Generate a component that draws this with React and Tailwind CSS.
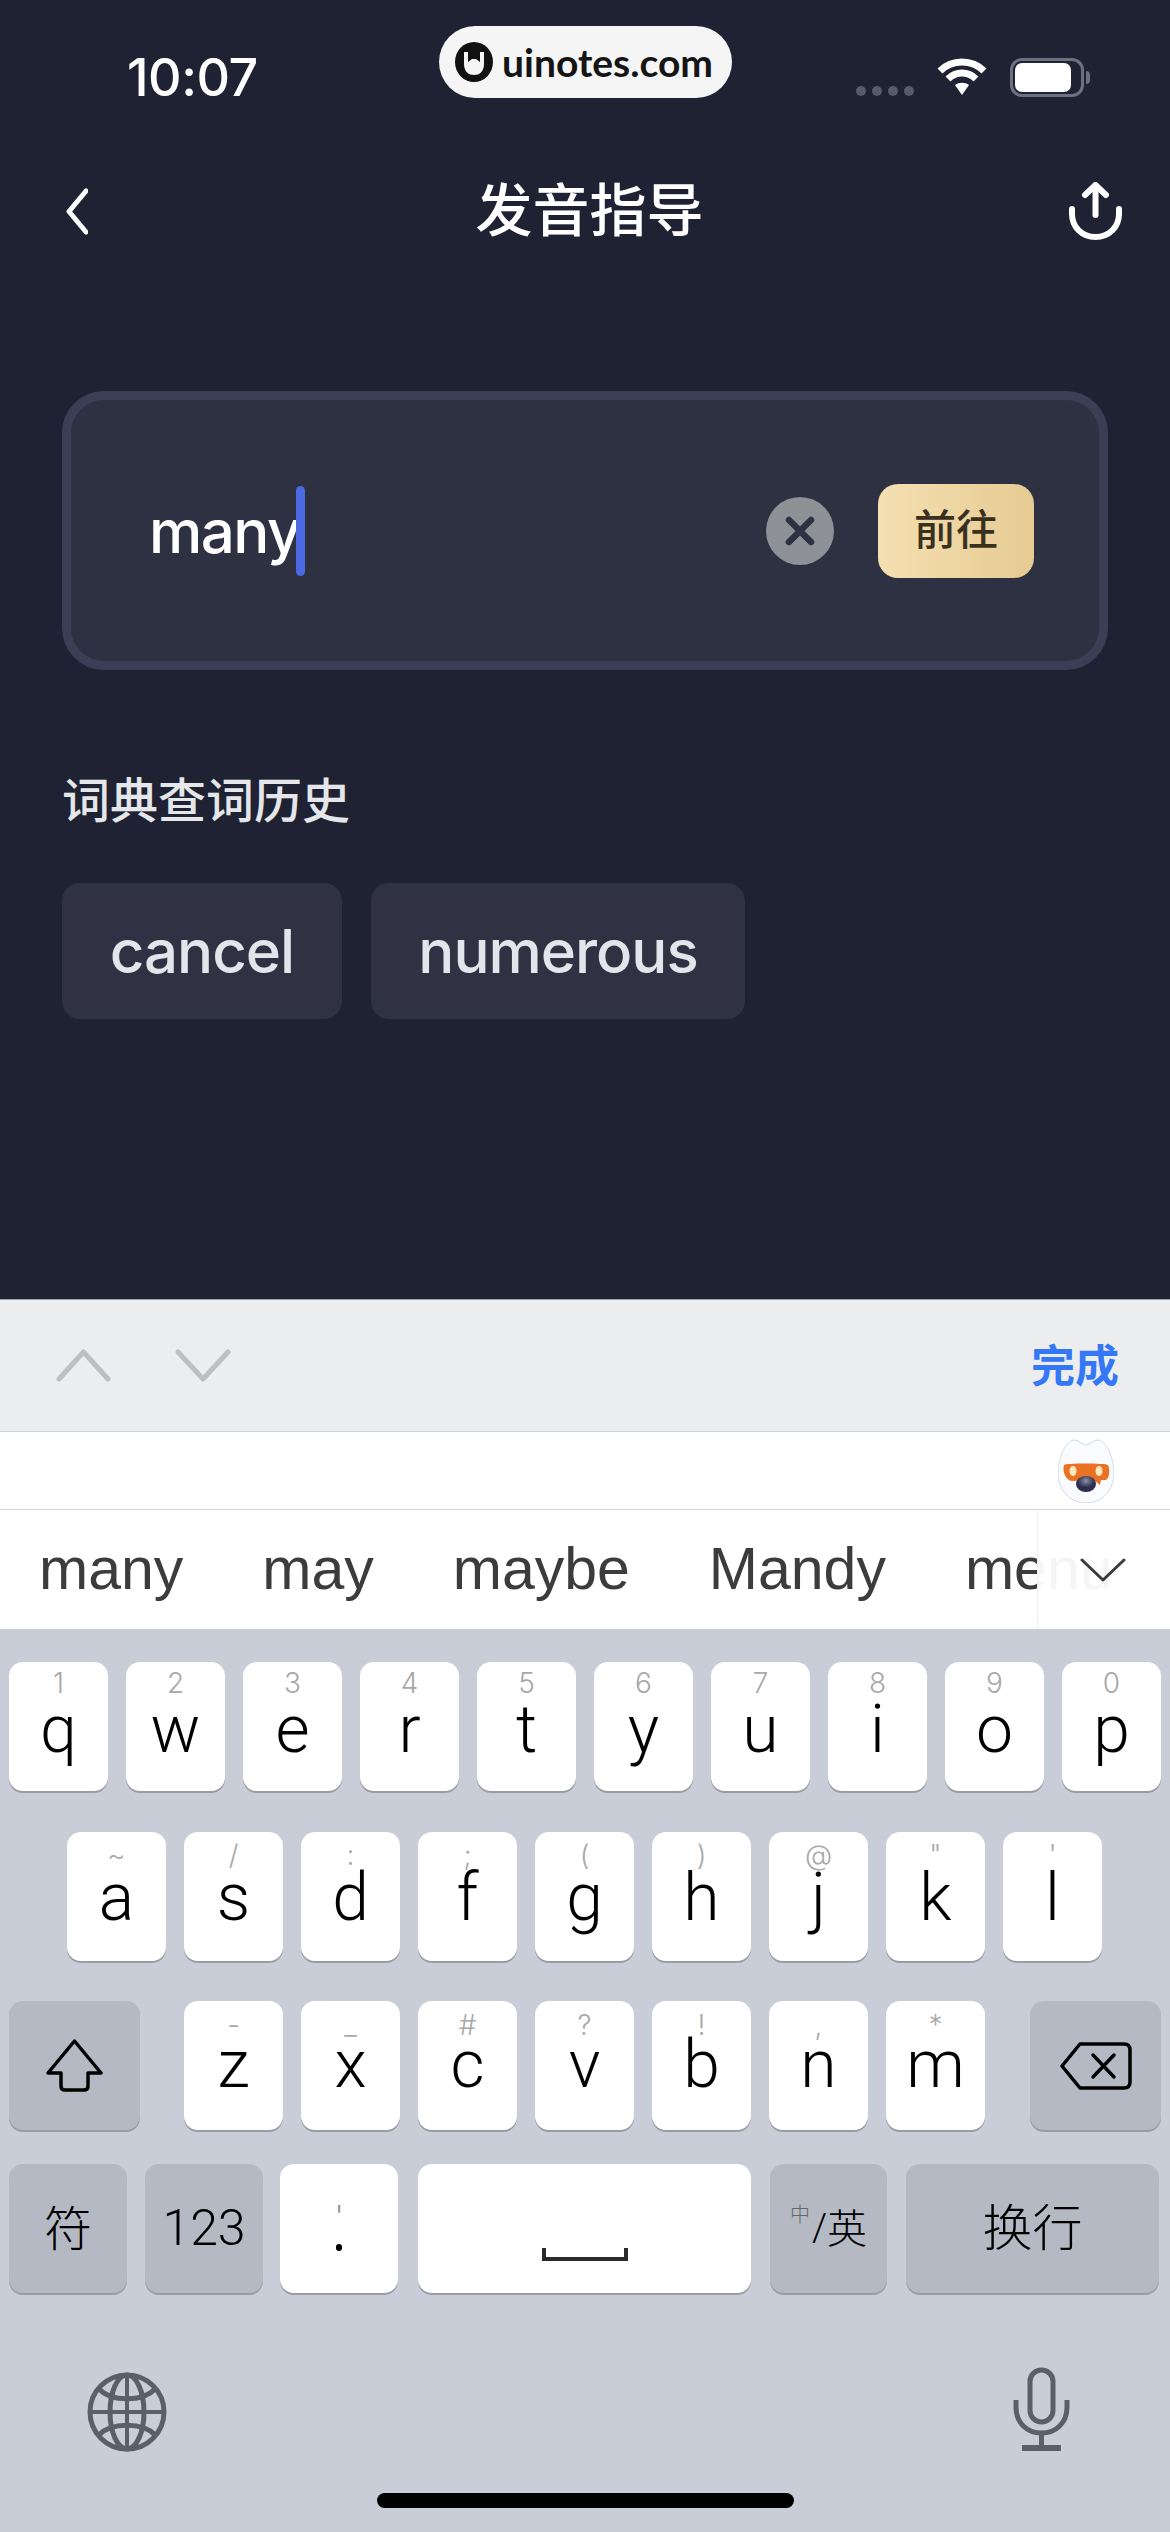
import React from "react";

const rowOne = [
  ["1", "q"], ["2", "w"], ["3", "e"], ["4", "r"], ["5", "t"],
  ["6", "y"], ["7", "u"], ["8", "i"], ["9", "o"], ["0", "p"],
];
const rowTwo = [
  ["~", "a"], ["/", "s"], [":", "d"], [";", "f"], ["(", "g"],
  [")", "h"], ["@", "j"], ['"', "k"], ["'", "l"],
];
const rowThree = [
  ["-", "z"], ["_", "x"], ["#", "c"], ["?", "v"], ["!", "b"], [",", "n"], ["*", "m"],
];

function LetterKey({ hint, letter, topClass, letterClass }) {
  return (
    <div className={`w-[99px] h-[129px] flex flex-col items-center bg-white rounded-[14px] shadow-[0_2px_0_#9a9ca3] ${topClass}`}>
      <span className="h-[28px] leading-[28px] text-[28px] font-light text-[#a8a8a8]">{hint}</span>
      <span className={`h-[66px] leading-[66px] text-[66px] font-light text-black font-['Roboto',sans-serif] ${letterClass}`}>{letter}</span>
    </div>
  );
}

function GrayKey({ width, children }) {
  return (
    <div className={`${width} h-[129px] flex items-center justify-center bg-[#b5b9c3] rounded-[14px] shadow-[0_2px_0_#9a9ca3] text-black`}>
      {children}
    </div>
  );
}

function StatusBar() {
  return (
    <div className="relative h-[150px] flex items-start pl-[127px] pr-[80px] pt-[47px]">
      <span className="text-[52px] leading-[62px] font-medium tracking-[-0.5px] text-white">10:07</span>

      {/* watermark */}
      <div className="absolute left-[439px] top-[26px] w-[293px] h-[72px] rounded-full bg-[#f5f5f5] flex items-center pl-[16px] gap-[9px]">
        <svg width="38" height="40" viewBox="0 0 38 40">
          <ellipse cx="19" cy="20" rx="19" ry="20" fill="#111" />
          <path d="M9 10 V22 C9 30 14 33 19 33 C24 33 29 30 29 22 V10 L25 10 V20 L21 17 H17 L13 20 V10 Z" fill="#f5f5f5" />
        </svg>
        <span className="text-[39px] leading-none font-bold text-[#151515] font-['Lato',sans-serif]">uinotes.com</span>
      </div>

      <div className="ml-auto flex items-start pt-[11px]">
        <div className="flex gap-[6px] mt-[28px]">
          <span className="w-[10px] h-[10px] rounded-full bg-[#565a6b]" />
          <span className="w-[10px] h-[10px] rounded-full bg-[#565a6b]" />
          <span className="w-[10px] h-[10px] rounded-full bg-[#565a6b]" />
          <span className="w-[10px] h-[10px] rounded-full bg-[#565a6b]" />
        </div>
        <svg className="ml-[23px]" width="50" height="37" viewBox="0 0 50 37" fill="none" stroke="#fff" strokeWidth="7">
          <path d="M3 13 C15 1 35 1 47 13" />
          <path d="M11 21 C19 13 31 13 39 21" />
          <path d="M18 27 L25 37 L32 27 C28 24 22 24 18 27 Z" fill="#fff" stroke="none" />
        </svg>
        <div className="ml-[23px] flex items-center">
          <div className="w-[74px] h-[39px] rounded-[12px] border-[3px] border-[#6d7080] p-[2px] pr-[10px]">
            <div className="w-full h-full rounded-[7px] bg-white" />
          </div>
          <span className="ml-[2px] w-[4px] h-[13px] rounded-r-full bg-[#6d7080]" />
        </div>
      </div>
    </div>
  );
}

function NavBar() {
  return (
    <div className="h-[122px] pl-[66px] pr-[48px] flex items-center justify-between">
      <div className="w-[44px]">
        <svg width="22" height="47" viewBox="0 0 22 47" fill="none" stroke="#fff" strokeWidth="5" strokeLinecap="round" strokeLinejoin="round">
          <path d="M20 3 L3 23.5 L20 44" />
        </svg>
      </div>
      <h1 className="text-[57px] leading-[70px] font-medium text-white">发音指导</h1>
      <svg width="53" height="58" viewBox="0 0 53 58" fill="none" stroke="#fff" strokeWidth="6" strokeLinecap="round" strokeLinejoin="round">
        <path d="M26.5 33 V4" />
        <path d="M16 13 L26.5 3 L37 13" />
        <path d="M3 27 V32 C3 45 13 55 26.5 55 C40 55 50 45 50 32 V27" />
      </svg>
    </div>
  );
}

function SearchBox() {
  return (
    <div className="mt-[119px] mx-[62px] h-[279px] rounded-[42px] border-[9px] border-[#3b3f55] bg-[#2e3142] flex items-center pl-[78px] pr-[65px]">
      <span className="text-[60px] leading-[90px] font-medium tracking-[-1.5px] text-white">many</span>
      <span className="w-[9px] h-[90px] rounded-full bg-[#4a69e2] -ml-[4px]" />
      <div className="ml-auto w-[68px] h-[68px] rounded-full bg-[#8e9196] flex items-center justify-center">
        <svg width="32" height="32" viewBox="0 0 32 32" fill="none" stroke="#2e3142" strokeWidth="6.5" strokeLinecap="round">
          <path d="M5 5 L27 27 M27 5 L5 27" />
        </svg>
      </div>
      <button className="ml-[44px] w-[156px] h-[94px] pb-[2px] rounded-[20px] bg-gradient-to-r from-[#f5e0b2] to-[#e6cb92] text-[42px] font-medium text-[#3a3020]">
        前往
      </button>
    </div>
  );
}

function History() {
  return (
    <div className="px-[62px]">
      <p className="mt-[101px] text-[48px] leading-[60px] font-medium text-[#e5e6ea]">词典查词历史</p>
      <div className="mt-[52px] flex gap-[29px]">
        <div className="w-[280px] h-[136px] rounded-[18px] bg-[#303244] flex items-center justify-center text-[60px] font-medium tracking-[-1px] text-[#e4e5ea]">cancel</div>
        <div className="w-[374px] h-[136px] rounded-[18px] bg-[#303244] flex items-center justify-center text-[60px] font-medium tracking-[-1px] text-[#e4e5ea]">numerous</div>
      </div>
    </div>
  );
}

function Toolbar() {
  return (
    <div className="h-[133px] bg-[#ecedef] border-t border-b border-t-[#9a9ea8] border-b-[#d4d5d8] flex items-center pl-[56px] pr-[51px]">
      <svg width="55" height="33" viewBox="0 0 55 33" fill="none" stroke="#bfbfbf" strokeWidth="5" strokeLinecap="round" strokeLinejoin="round">
        <path d="M3 30 L27.5 3 L52 30" />
      </svg>
      <svg className="ml-[64px]" width="56" height="33" viewBox="0 0 56 33" fill="none" stroke="#bfbfbf" strokeWidth="5" strokeLinecap="round" strokeLinejoin="round">
        <path d="M3 3 L28 30 L53 3" />
      </svg>
      <span className="ml-auto text-[44px] font-bold text-[#3478f6]">完成</span>
    </div>
  );
}

function MascotBar() {
  return (
    <div className="h-[78px] bg-white border-b border-[#d4d5d8] flex items-center justify-end pr-[56px]">
      <svg width="56" height="64" viewBox="0 0 56 64">
        <defs>
          <radialGradient id="nose" cx="50%" cy="30%" r="70%">
            <stop offset="0%" stopColor="#8a8ea8" />
            <stop offset="60%" stopColor="#2c2f4e" />
          </radialGradient>
        </defs>
        <path d="M28 6 C24 5 20 1 16 1 C7 2 0 20 0 34 C0 51 12 64 28 64 C44 64 56 51 56 34 C56 20 49 2 40 1 C36 1 32 5 28 6 Z" fill="#fafbfe" stroke="#d5d8e6" strokeWidth="1" />
        <path d="M6 26 C8 24 48 24 50 26 C52 30 52 38 48 41 L43 41 L42 46 L36 41 L14 42 C8 42 4 32 6 26 Z" fill="#ea7224" />
        <ellipse cx="15" cy="32" rx="3.5" ry="5" fill="#fdeabb" />
        <ellipse cx="41" cy="32" rx="3.5" ry="5" fill="#fdeabb" />
        <ellipse cx="28" cy="45" rx="10" ry="8" fill="url(#nose)" />
      </svg>
    </div>
  );
}

function Suggestions() {
  return (
    <div className="relative h-[119px] bg-white overflow-hidden flex items-center pl-[39px] gap-[79px] whitespace-nowrap text-[59px] text-[#3c3c3c] font-['Liberation_Sans',sans-serif]">
      <span>many</span>
      <span>may</span>
      <span>maybe</span>
      <span>Mandy</span>
      <span>menu</span>
      <div className="absolute right-0 top-0 bottom-0 w-[133px] bg-white/95 border-l border-[#f0f0f0] flex items-center justify-end pr-[44px]">
        <svg width="46" height="24" viewBox="0 0 46 24" fill="none" stroke="#3c3c3c" strokeWidth="3" strokeLinecap="round" strokeLinejoin="round">
          <path d="M2 2 L23 22 L44 2" />
        </svg>
      </div>
    </div>
  );
}

function Keyboard() {
  return (
    <div className="flex-1 bg-[#c9cdd7] flex flex-col pt-[33px]">
      <div className="flex gap-[18px] pl-[9px]">
        {rowOne.map(([hint, letter]) => (
          <LetterKey key={letter} hint={hint} letter={letter} topClass="pt-[7px]" letterClass="mt-0" />
        ))}
      </div>

      <div className="mt-[41px] flex gap-[18px] pl-[67px]">
        {rowTwo.map(([hint, letter]) => (
          <LetterKey key={letter} hint={hint} letter={letter} topClass="pt-[9px]" letterClass="-mt-[4px]" />
        ))}
      </div>

      <div className="mt-[40px] flex pl-[9px]">
        <GrayKey width="w-[131px]">
          <svg width="57" height="53" viewBox="0 0 57 53" fill="none" stroke="#000" strokeWidth="3.5" strokeLinejoin="round">
            <path d="M28.5 2 L55 34 H42 V47 C42 49 41 51 38 51 H19 C16 51 15 49 15 47 V34 H2 Z" />
          </svg>
        </GrayKey>
        <div className="ml-[44px] flex gap-[18px]">
          {rowThree.map(([hint, letter]) => (
            <LetterKey key={letter} hint={hint} letter={letter} topClass="pt-[10px]" letterClass="-mt-[7px]" />
          ))}
        </div>
        <div className="ml-[45px]">
          <GrayKey width="w-[131px]">
            <svg width="72" height="48" viewBox="0 0 72 48" fill="none" stroke="#000" strokeWidth="3.5" strokeLinecap="round" strokeLinejoin="round">
              <path d="M20 2 H64 C68 2 70 4 70 8 V40 C70 44 68 46 64 46 H20 L2 24 Z" />
              <path d="M33 13 L54 35 M54 13 L33 35" />
            </svg>
          </GrayKey>
        </div>
      </div>

      <div className="mt-[34px] flex pl-[9px] font-light">
        <GrayKey width="w-[118px]"><span className="text-[48px]">符</span></GrayKey>
        <div className="ml-[18px]">
          <GrayKey width="w-[118px]"><span className="text-[50px] font-['Roboto',sans-serif]">123</span></GrayKey>
        </div>
        <div className="ml-[17px] w-[118px] h-[129px] bg-white rounded-[14px] shadow-[0_2px_0_#9a9ca3] flex flex-col items-center pt-[38px]">
          <span className="h-[28px] leading-[28px] text-[30px] text-[#8f8f8f]">'</span>
          <span className="mt-[14px] w-[6px] h-[7px] rounded-full bg-black" />
        </div>
        <div className="ml-[20px] w-[333px] h-[129px] bg-white rounded-[14px] shadow-[0_2px_0_#9a9ca3] flex justify-center pt-[84px]">
          <svg width="86" height="13" viewBox="0 0 86 13" fill="none" stroke="#2b2b2b" strokeWidth="4">
            <path d="M2 0 V11 H84 V0" />
          </svg>
        </div>
        <div className="ml-[19px]">
          <GrayKey width="w-[117px]">
            <span className="text-[20px] text-[#666] -mt-[28px]">中</span>
            <span className="text-[38px] ml-[2px] font-['Roboto',sans-serif]">/</span>
            <span className="text-[40px]">英</span>
          </GrayKey>
        </div>
        <div className="ml-[19px]">
          <GrayKey width="w-[253px]"><span className="text-[50px]">换行</span></GrayKey>
        </div>
      </div>

      <div className="mt-[74px] flex items-start justify-between pl-[87px] pr-[100px]">
        <svg className="mt-[5px]" width="80" height="80" viewBox="0 0 80 80" fill="none" stroke="#5c5f68" strokeWidth="5">
          <circle cx="40" cy="40" r="37" />
          <ellipse cx="40" cy="40" rx="17" ry="37" />
          <path d="M40 3 V77 M3 40 H77" strokeWidth="4" />
          <path d="M12 17 C24 30 56 30 68 17 M12 63 C24 50 56 50 68 63" />
        </svg>
        <svg width="57" height="84" viewBox="0 0 57 84" fill="none" stroke="#5c5f68" strokeWidth="5">
          <rect x="17" y="3" width="23" height="52" rx="11.5" />
          <path d="M3 33 V40 C3 56 14 66 28.5 66 C43 66 54 56 54 40 V33" />
          <path d="M28.5 66 V80" />
          <path d="M9 81 H48" strokeWidth="6" />
        </svg>
      </div>

      <div className="mt-[41px] mx-auto w-[417px] h-[15px] rounded-full bg-black" />
    </div>
  );
}

export default function App() {
  return (
    <div className="w-[1170px] h-[2532px] overflow-hidden flex flex-col font-['Inter','Noto_Sans_CJK_SC',sans-serif]">
      <div className="h-[1299px] bg-[#1e2233]">
        <StatusBar />
        <NavBar />
        <SearchBox />
        <History />
      </div>
      <Toolbar />
      <MascotBar />
      <Suggestions />
      <Keyboard />
    </div>
  );
}
